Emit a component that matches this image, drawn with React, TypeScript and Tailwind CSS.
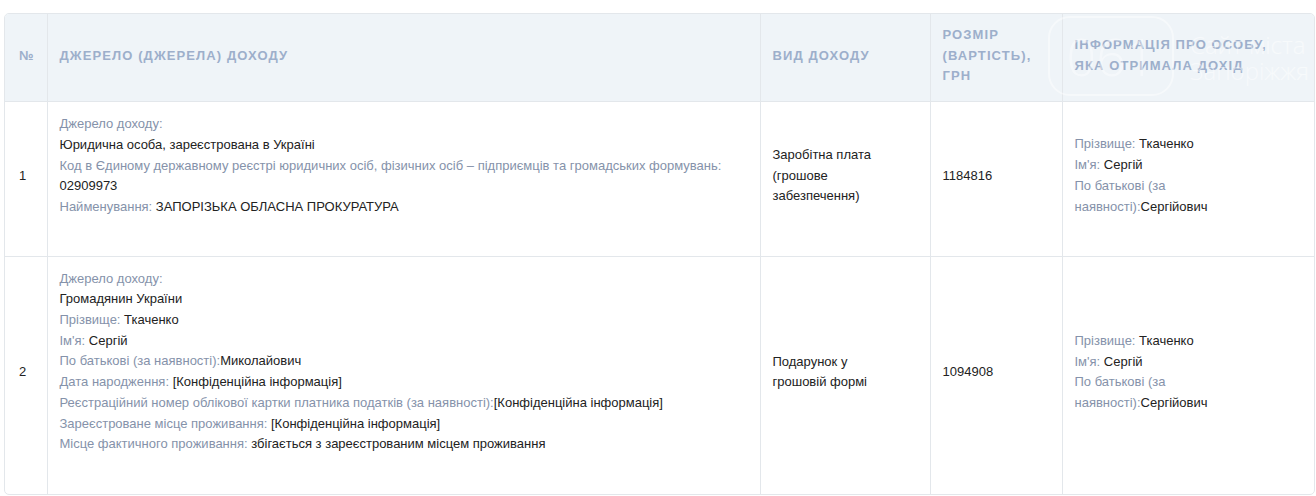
import React from "react";

const L = ({ children }: { children: React.ReactNode }) => (
  <span className="text-[#8592aa]">{children}</span>
);
const V = ({ children }: { children: React.ReactNode }) => (
  <span className="text-[#222]">{children}</span>
);

export default function App() {
  const th =
    "border-l border-[#e3e7eb] first:border-l-0 pl-3 pr-6 pt-[11px] pb-[14px] align-middle text-left font-bold uppercase tracking-[1.1px] text-[#9dafcb]";
  const td = "border-l border-[#e3e7eb] first:border-l-0 pl-3 pr-6 pt-3 pb-[18px] align-middle";
  return (
    <div
      className="bg-white w-[1316px] h-[496px] pt-[13px] pl-[4px]"
      style={{ fontFamily: '"Liberation Sans", Arial, sans-serif' }}
    >
      <div className="relative w-[1311px] border border-[#e3e7eb] rounded-[5px] overflow-hidden text-[13px] leading-[20.7px]">
        <table className="w-full table-fixed border-collapse">
          <colgroup>
            <col className="w-[42px]" />
            <col className="w-[713px]" />
            <col className="w-[170px]" />
            <col className="w-[132px]" />
            <col />
          </colgroup>
          <thead>
            <tr className="bg-[#eff4f8] border-b border-[#e3e7eb]">
              <th className={th + " pl-[14px] pr-0 tracking-normal"}>№</th>
              <th className={th}>Джерело (джерела) доходу</th>
              <th className={th + " pr-8"}>Вид доходу</th>
              <th className={th}>Розмір (вартість), грн</th>
              <th className={th}>Інформація про особу, яка отримала дохід</th>
            </tr>
          </thead>
          <tbody className="text-[#222]">
            <tr className="border-b border-[#e3e7eb]">
              <td className={td + " pl-[14px] pr-0 pb-3"}>1</td>
              <td className="border-l border-[#e3e7eb] px-3 pt-3 pb-[38px] align-top">
                <div><L>Джерело доходу:</L></div>
                <div><V>Юридична особа, зареєстрована в Україні</V></div>
                <div><L>Код в Єдиному державному реєстрі юридичних осіб, фізичних осіб – підприємців та громадських формувань:</L></div>
                <div><V>02909973</V></div>
                <div><L>Найменування: </L><V>ЗАПОРІЗЬКА ОБЛАСНА ПРОКУРАТУРА</V></div>
              </td>
              <td className={td + " pr-8"}>Заробітна плата (грошове забезпечення)</td>
              <td className={td}>1184816</td>
              <td className={td}>
                <div><L>Прізвище: </L><V>Ткаченко</V></div>
                <div><L>Ім'я: </L><V>Сергій</V></div>
                <div><L>По батькові (за наявності):</L><V>Сергійович</V></div>
              </td>
            </tr>
            <tr>
              <td className={td + " pl-[14px] pr-0 pb-3"}>2</td>
              <td className="border-l border-[#e3e7eb] px-3 pt-3 pb-[39px] align-top">
                <div><L>Джерело доходу:</L></div>
                <div><V>Громадянин України</V></div>
                <div><L>Прізвище: </L><V>Ткаченко</V></div>
                <div><L>Ім'я: </L><V>Сергій</V></div>
                <div><L>По батькові (за наявності):</L><V>Миколайович</V></div>
                <div><L>Дата народження: </L><V>[Конфіденційна інформація]</V></div>
                <div><L>Реєстраційний номер облікової картки платника податків (за наявності):</L><V>[Конфіденційна інформація]</V></div>
                <div><L>Зареєстроване місце проживання: </L><V>[Конфіденційна інформація]</V></div>
                <div><L>Місце фактичного проживання: </L><V>збігається з зареєстрованим місцем проживання</V></div>
              </td>
              <td className={td + " pr-8"}>Подарунок у грошовій формі</td>
              <td className={td}>1094908</td>
              <td className={td}>
                <div><L>Прізвище: </L><V>Ткаченко</V></div>
                <div><L>Ім'я: </L><V>Сергій</V></div>
                <div><L>По батькові (за наявності):</L><V>Сергійович</V></div>
              </td>
            </tr>
          </tbody>
        </table>
        <div className="pointer-events-none absolute left-[1043px] top-[2px] flex items-start gap-4 opacity-60">
          <div className="relative w-[126px] h-[80px] rounded-[22px] border-2 border-white/80 flex items-center justify-center">
            <span className="text-[52px] leading-none font-light text-white/70" style={{ fontFamily: '"Open Sans", sans-serif' }}>061</span>
          </div>
          <div className="pt-[16px] text-[24px] leading-[26px] font-light text-white/80" style={{ fontFamily: '"Open Sans", sans-serif' }}>
            <div>Сайт міста</div>
            <div>Запоріжжя</div>
          </div>
        </div>
      </div>
    </div>
  );
}
